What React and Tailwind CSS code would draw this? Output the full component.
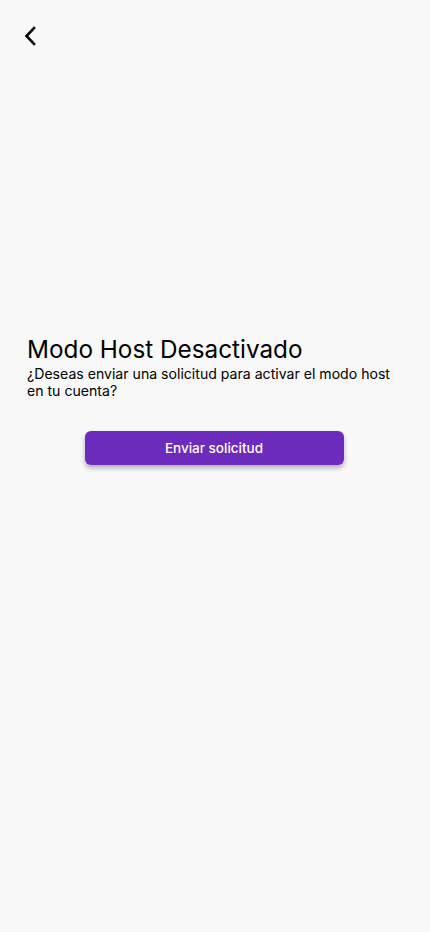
export default function App() {
  return (
    <div className="w-[430px] h-[932px] bg-[#f8f8f8] flex flex-col" style={{ fontFamily: "Inter, 'Noto Sans', sans-serif" }}>
      <div className="h-[72px] pl-[22px] pt-[25px]">
        <svg width="18" height="22" viewBox="0 0 18 22" fill="none">
          <path d="M12 3 L4.5 11 L12 19" stroke="#000" strokeWidth="2.6" strokeLinecap="square" strokeLinejoin="miter" />
        </svg>
      </div>
      <div className="pt-[263px] px-[27px]">
        <h1 className="text-[24.3px] leading-[29px] text-black font-normal">Modo Host Desactivado</h1>
        <p className="text-[14.1px] leading-[17px] text-black mt-[1px]">¿Deseas enviar una solicitud para activar el modo host en tu cuenta?</p>
      </div>
      <div className="flex justify-center mt-[32px] pr-[2px]">
        <button className="w-[259px] h-[34px] rounded-[6px] bg-[#6d2bbd] text-white text-[13.5px] font-medium shadow-[0_3px_5px_rgba(0,0,0,0.3)]" style={{ fontFamily: "Inter, sans-serif" }}>
          Enviar solicitud
        </button>
      </div>
    </div>
  );
}
